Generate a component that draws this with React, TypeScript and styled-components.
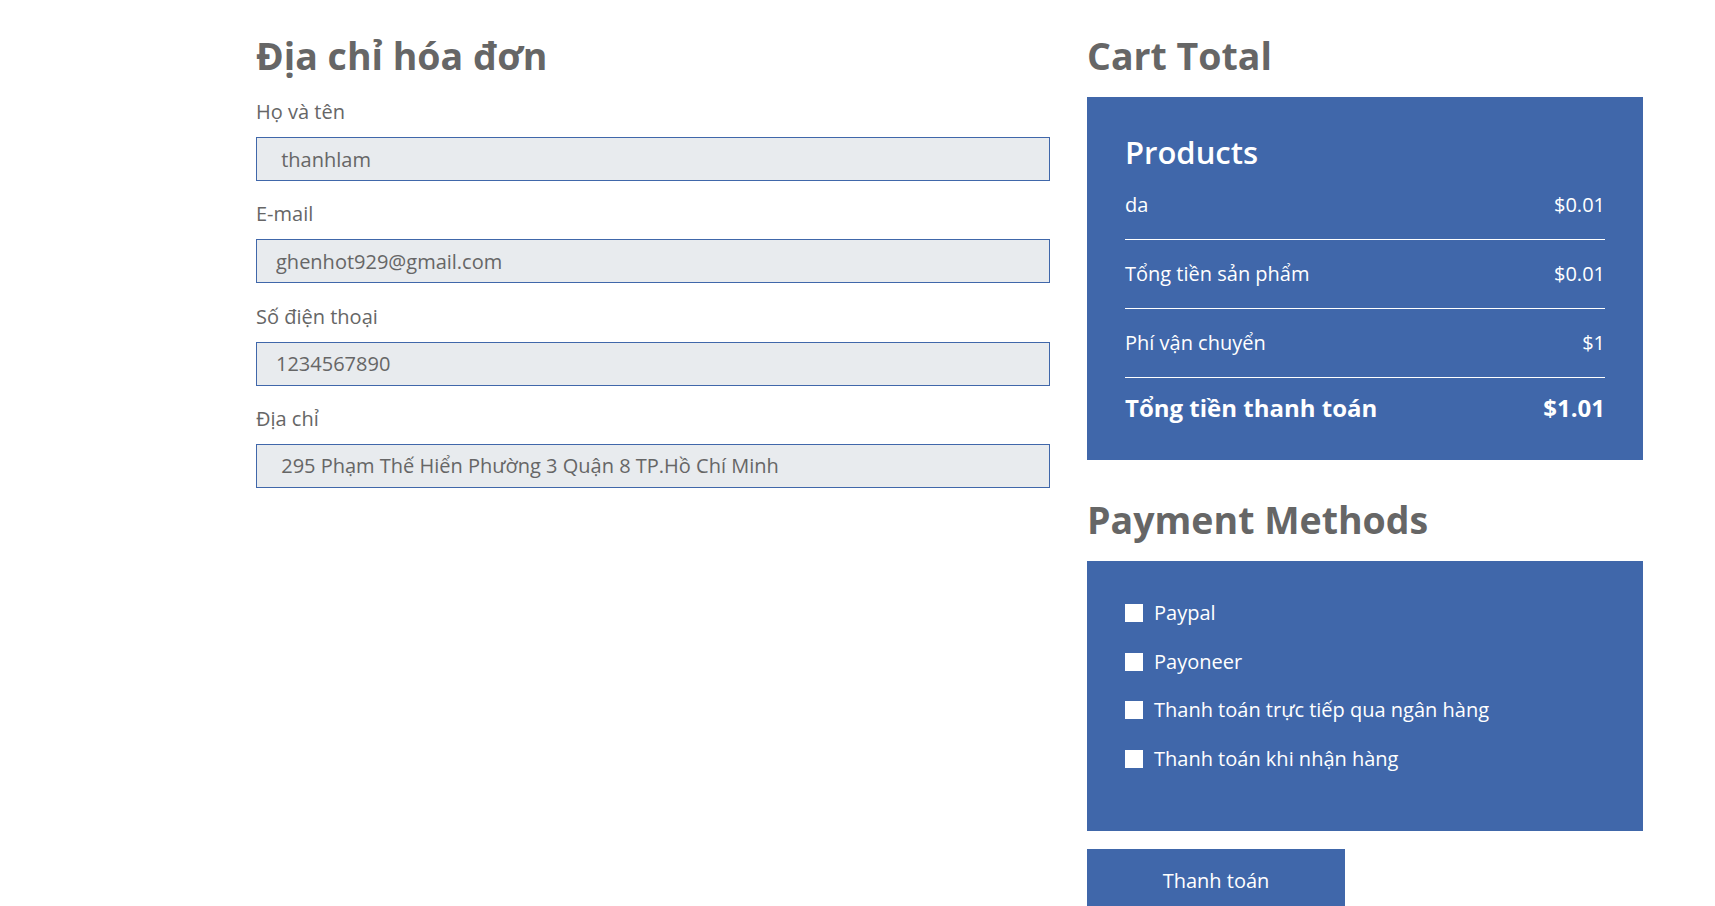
import React from "react";
import styled, { createGlobalStyle } from "styled-components";

const GlobalStyle = createGlobalStyle`
  html, body {
    margin: 0;
    padding: 0;
    background: #ffffff;
  }
  body {
    font-family: "Open Sans", "Noto Sans", sans-serif;
    color: #666666;
  }
  * { box-sizing: border-box; }
`;

const BLUE = "#4067aa";

const Page = styled.div`
  display: flex;
  align-items: flex-start;
  padding: 34px 0 0 256px;
  min-height: 906px;
`;

const BillingColumn = styled.section`
  width: 794px;
  display: flex;
  flex-direction: column;
`;

const SideColumn = styled.aside`
  width: 556px;
  margin-left: 37px;
  display: flex;
  flex-direction: column;
`;

const Heading = styled.h2<{ $top?: number; $bottom?: number }>`
  margin: ${(p) => p.$top ?? 0}px 0 ${(p) => p.$bottom ?? 20}px;
  font-size: 37.5px;
  line-height: 43px;
  font-weight: 700;
  color: #666666;
`;

const Field = styled.div`
  display: flex;
  flex-direction: column;
  margin-bottom: 19.3px;
`;

const Label = styled.label`
  font-size: 20px;
  line-height: 27px;
  color: #666666;
  margin-bottom: 12px;
`;

const Input = styled.input`
  height: 44px;
  width: 100%;
  border: 1px solid ${BLUE};
  background: #e8ebee;
  padding: 0 19px;
  font-family: "Open Sans", "Noto Sans", sans-serif;
  font-size: 20px;
  color: #666666;
  outline: none;
  border-radius: 0;
`;

const Panel = styled.div<{ $pb: number }>`
  background: ${BLUE};
  color: #ffffff;
  padding: 38px 38px ${(p) => p.$pb}px;
`;

const PanelTitle = styled.h3`
  margin: 0 0 2px;
  font-size: 31px;
  line-height: 34px;
  font-weight: 600;
`;

const SummaryRow = styled.div`
  display: flex;
  justify-content: space-between;
  padding: 20px 0 20px;
  border-bottom: 1px solid #ffffff;
  font-size: 20px;
  line-height: 28px;
`;

const TotalRow = styled.div`
  display: flex;
  justify-content: space-between;
  padding-top: 12px;
  font-size: 24px;
  line-height: 36px;
  font-weight: 700;
`;

const Option = styled.label`
  display: flex;
  align-items: center;
  gap: 11px;
  margin-bottom: 20.6px;
  font-size: 20px;
  line-height: 28px;
  cursor: pointer;
`;

const Box = styled.input`
  appearance: none;
  -webkit-appearance: none;
  width: 18px;
  height: 18px;
  margin: 0;
  background: #ffffff;
  border: none;
  border-radius: 0;
  flex: none;
`;

const PayButton = styled.button`
  margin-top: 18px;
  width: 258px;
  height: 62px;
  border: none;
  border-radius: 0;
  background: ${BLUE};
  color: #ffffff;
  font-family: "Open Sans", "Noto Sans", sans-serif;
  font-size: 20px;
  cursor: pointer;
`;

const fields = [
  { label: "Họ và tên", value: " thanhlam" },
  { label: "E-mail", value: "ghenhot929@gmail.com" },
  { label: "Số điện thoại", value: "1234567890" },
  { label: "Địa chỉ", value: " 295 Phạm Thế Hiển Phường 3 Quận 8 TP.Hồ Chí Minh" },
];

const summary = [
  { name: "da", price: "$0.01" },
  { name: "Tổng tiền sản phẩm", price: "$0.01" },
  { name: "Phí vận chuyển", price: "$1" },
];

const methods = [
  "Paypal",
  "Payoneer",
  "Thanh toán trực tiếp qua ngân hàng",
  "Thanh toán khi nhận hàng",
];

export default function App() {
  return (
    <>
      <GlobalStyle />
      <Page>
        <BillingColumn>
          <Heading $bottom={21}>Địa chỉ hóa đơn</Heading>
          {fields.map((f) => (
            <Field key={f.label}>
              <Label>{f.label}</Label>
              <Input type="text" defaultValue={f.value} readOnly />
            </Field>
          ))}
        </BillingColumn>
        <SideColumn>
          <Heading>Cart Total</Heading>
          <Panel $pb={34}>
            <PanelTitle>Products</PanelTitle>
            {summary.map((s) => (
              <SummaryRow key={s.name}>
                <span>{s.name}</span>
                <span>{s.price}</span>
              </SummaryRow>
            ))}
            <TotalRow>
              <span>Tổng tiền thanh toán</span>
              <span>$1.01</span>
            </TotalRow>
          </Panel>
          <Heading $top={38}>Payment Methods</Heading>
          <Panel $pb={38}>
            {methods.map((m) => (
              <Option key={m}>
                <Box type="checkbox" />
                <span>{m}</span>
              </Option>
            ))}
          </Panel>
          <PayButton type="button">Thanh toán</PayButton>
        </SideColumn>
      </Page>
    </>
  );
}
